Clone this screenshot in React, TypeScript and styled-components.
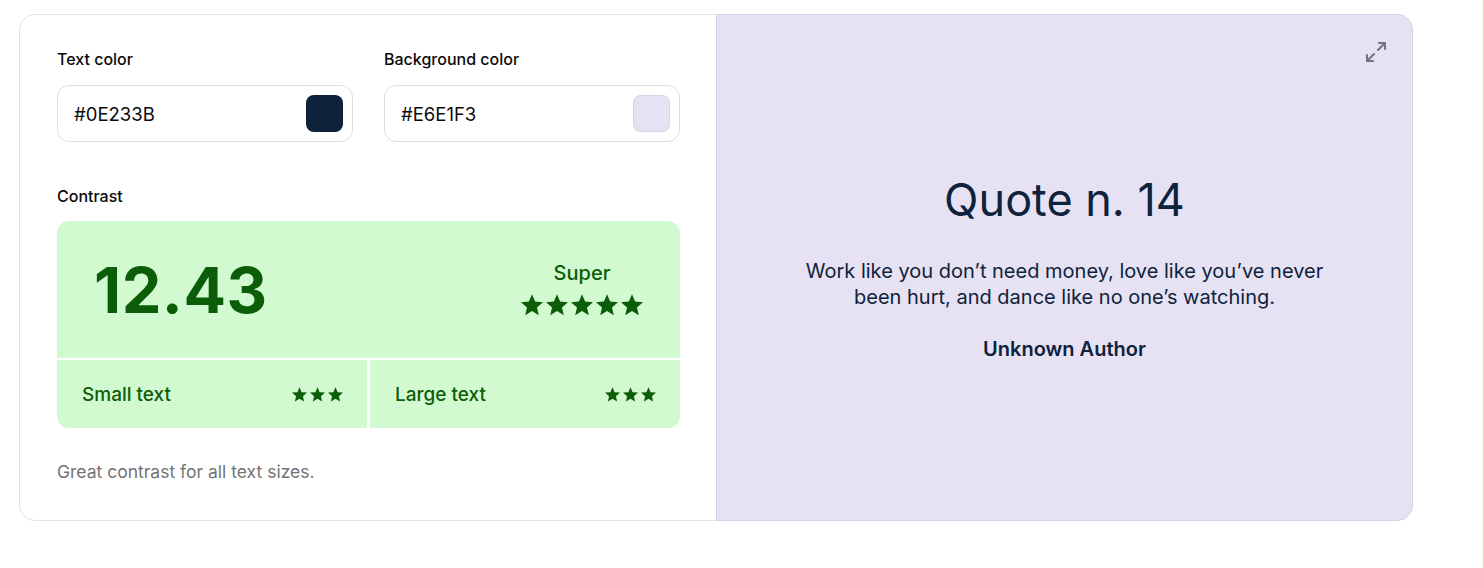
import styled, { createGlobalStyle } from "styled-components";
import { Maximize2 } from "lucide-react";

const Global = createGlobalStyle`
	body {
		margin: 0;
		background: #ffffff;
		font-family: Inter, "Noto Sans", Arial, sans-serif;
	}
`;

const Page = styled.main`
	padding: 14px 0 0 19px;
`;

const Card = styled.section`
	display: grid;
	grid-template-columns: 1fr 1fr;
	width: 1394px;
	height: 507px;
	box-sizing: border-box;
	border: 1px solid #e3e3e6;
	border-radius: 16px;
	background: #fff;
`;

const Editor = styled.div`
	display: flex;
	flex-direction: column;
	padding: 34px 36px 0 37px;
`;

const Fields = styled.div`
	display: grid;
	grid-template-columns: 1fr 1fr;
	gap: 31px;
`;

const Field = styled.div`
	display: flex;
	flex-direction: column;
`;

const Label = styled.div`
	font-size: 16px;
	font-weight: 500;
	color: #0a0a0a;
	line-height: 20px;
	margin-bottom: 16px;
`;

const InputBox = styled.div`
	display: flex;
	align-items: center;
	justify-content: space-between;
	height: 57px;
	box-sizing: border-box;
	border: 1px solid #dedee2;
	border-radius: 12px;
	padding: 0 9px 0 16px;
	font-size: 18.5px;
	color: #0a0a0a;
`;

const Swatch = styled.span<{ $color: string }>`
	width: 37px;
	height: 37px;
	border-radius: 8px;
	background: ${(p) => p.$color};
	box-sizing: border-box;
	border: 1px solid rgba(0, 0, 0, 0.06);
`;

const ContrastLabel = styled(Label)`
	margin-top: 44px;
	margin-bottom: 15px;
`;

const ScoreGrid = styled.div`
	display: grid;
	grid-template-columns: 1fr 1fr;
	grid-template-rows: 137px 68px;
	gap: 2px 3px;
	color: #0c5d08;
`;

const ScoreTop = styled.div`
	grid-column: span 2;
	display: flex;
	align-items: center;
	justify-content: space-between;
	background: #d2fad1;
	border-radius: 12px 12px 0 0;
	padding: 0 37px 0 37px;
`;

const Ratio = styled.div`
	font-size: 63px;
	font-weight: 700;
	letter-spacing: 0.5px;
	line-height: 1;
	padding-top: 2px;
`;

const Rating = styled.div`
	display: flex;
	flex-direction: column;
	align-items: center;
	gap: 9px;
	margin-top: -2px;
`;

const RatingName = styled.div`
	font-size: 20px;
	font-weight: 500;
	line-height: 24px;
`;

const Stars = styled.div<{ $gap: number }>`
	display: flex;
	gap: ${(p) => p.$gap}px;
`;

const SizeCell = styled.div<{ $side: "left" | "right" }>`
	display: flex;
	align-items: center;
	justify-content: space-between;
	background: #d2fad1;
	padding: 0 24px 0 25px;
	border-radius: ${(p) => (p.$side === "left" ? "0 0 0 12px" : "0 0 12px 0")};
	font-size: 19px;
	font-weight: 500;
`;

const Note = styled.p`
	margin: 33px 0 0;
	font-size: 17.5px;
	color: #737373;
`;

const Preview = styled.div`
	position: relative;
	display: flex;
	flex-direction: column;
	align-items: center;
	justify-content: center;
	margin: -1px -1px -1px 0;
	background: #e6e1f3;
	border: 1px solid #d8d2e8;
	border-radius: 0 16px 16px 0;
	color: #0e233b;
	text-align: center;
	padding-bottom: 2px;
`;

const Expand = styled.button`
	position: absolute;
	top: 25px;
	right: 24px;
	border: none;
	background: none;
	padding: 0;
	color: #76737f;
	display: flex;
`;

const QuoteTitle = styled.h2`
	margin: 0;
	font-size: 45px;
	font-weight: 400;
	line-height: 56px;
`;

const QuoteText = styled.p`
	margin: 30px 0 0;
	max-width: 560px;
	font-size: 20px;
	line-height: 26px;
`;

const Author = styled.p`
	margin: 26px 0 0;
	font-size: 20px;
	font-weight: 600;
	line-height: 26px;
`;

const Star = ({ size }: { size: number }) => (
	<svg width={size} height={size} viewBox="2 2 20 19.5" fill="currentColor">
		<path d="M12 17.27L18.18 21l-1.64-7.03L22 9.24l-7.19-.61L12 2 9.19 8.63 2 9.24l5.46 4.73L5.82 21z" />
	</svg>
);

const StarRow = ({ count, size, gap }: { count: number; size: number; gap: number }) => (
	<Stars $gap={gap}>
		{Array.from({ length: count }).map((_, i) => (
			<Star key={i} size={size} />
		))}
	</Stars>
);

export default function App() {
	return (
		<Page>
			<Global />
			<Card>
				<Editor>
					<Fields>
						<Field>
							<Label>Text color</Label>
							<InputBox>
								#0E233B
								<Swatch $color="#0e233b" />
							</InputBox>
						</Field>
						<Field>
							<Label>Background color</Label>
							<InputBox>
								#E6E1F3
								<Swatch $color="#e6e1f3" />
							</InputBox>
						</Field>
					</Fields>

					<ContrastLabel>Contrast</ContrastLabel>
					<ScoreGrid>
						<ScoreTop>
							<Ratio>12.43</Ratio>
							<Rating>
								<RatingName>Super</RatingName>
								<StarRow count={5} size={22} gap={3} />
							</Rating>
						</ScoreTop>
						<SizeCell $side="left">
							Small text
							<StarRow count={3} size={15} gap={3} />
						</SizeCell>
						<SizeCell $side="right">
							Large text
							<StarRow count={3} size={15} gap={3} />
						</SizeCell>
					</ScoreGrid>

					<Note>Great contrast for all text sizes.</Note>
				</Editor>

				<Preview>
					<Expand aria-label="Expand">
						<Maximize2 size={24} strokeWidth={2} />
					</Expand>
					<QuoteTitle>Quote n. 14</QuoteTitle>
					<QuoteText>
						Work like you don’t need money, love like you’ve never been hurt, and dance like no one’s watching.
					</QuoteText>
					<Author>Unknown Author</Author>
				</Preview>
			</Card>
		</Page>
	);
}
